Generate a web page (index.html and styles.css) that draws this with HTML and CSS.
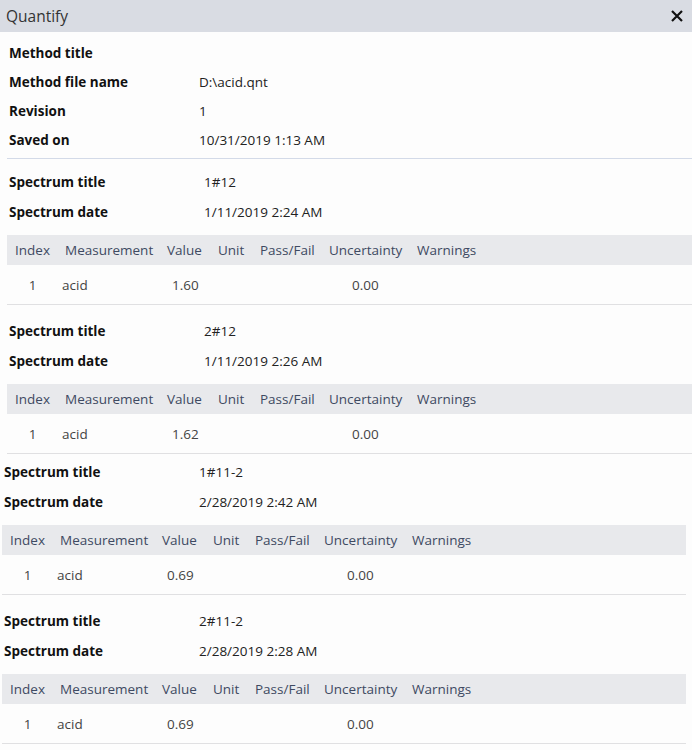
FILE: index.html
```html
<!DOCTYPE html>
<html>
<head>
<meta charset="utf-8">
<link rel="stylesheet" href="styles.css">
</head>
<body>
<div class="titlebar">
  <span class="title">Quantify</span>
  <svg class="close" width="12" height="12" viewBox="0 0 12 12"><path d="M1 1 L11 11 M11 1 L1 11" stroke="#111" stroke-width="2.2" fill="none"/></svg>
</div>
<div class="method">
  <div class="mrow"><span class="label">Method title</span><span class="val"></span></div>
  <div class="mrow"><span class="label">Method file name</span><span class="val">D:\acid.qnt</span></div>
  <div class="mrow"><span class="label">Revision</span><span class="val">1</span></div>
  <div class="mrow"><span class="label">Saved on</span><span class="val">10/31/2019 1:13 AM</span></div>
</div>
<div class="upper">
  <div class="section first">
    <div class="srow"><span class="label">Spectrum title</span><span class="val">1#12</span></div>
    <div class="srow"><span class="label">Spectrum date</span><span class="val">1/11/2019 2:24 AM</span></div>
    <div class="thead"><span>Index</span><span>Measurement</span><span>Value</span><span>Unit</span><span>Pass/Fail</span><span>Uncertainty</span><span>Warnings</span></div>
    <div class="trow"><span class="idx">1</span><span class="m">acid</span><span class="v">1.60</span><span></span><span></span><span class="u">0.00</span><span></span></div>
  </div>
  <div class="section">
    <div class="srow"><span class="label">Spectrum title</span><span class="val">2#12</span></div>
    <div class="srow"><span class="label">Spectrum date</span><span class="val">1/11/2019 2:26 AM</span></div>
    <div class="thead"><span>Index</span><span>Measurement</span><span>Value</span><span>Unit</span><span>Pass/Fail</span><span>Uncertainty</span><span>Warnings</span></div>
    <div class="trow"><span class="idx">1</span><span class="m">acid</span><span class="v">1.62</span><span></span><span></span><span class="u">0.00</span><span></span></div>
  </div>
</div>
<div class="lower">
  <div class="section third">
    <div class="srow"><span class="label">Spectrum title</span><span class="val">1#11-2</span></div>
    <div class="srow"><span class="label">Spectrum date</span><span class="val">2/28/2019 2:42 AM</span></div>
    <div class="thead"><span>Index</span><span>Measurement</span><span>Value</span><span>Unit</span><span>Pass/Fail</span><span>Uncertainty</span><span>Warnings</span></div>
    <div class="trow"><span class="idx">1</span><span class="m">acid</span><span class="v">0.69</span><span></span><span></span><span class="u">0.00</span><span></span></div>
  </div>
  <div class="section">
    <div class="srow"><span class="label">Spectrum title</span><span class="val">2#11-2</span></div>
    <div class="srow"><span class="label">Spectrum date</span><span class="val">2/28/2019 2:28 AM</span></div>
    <div class="thead"><span>Index</span><span>Measurement</span><span>Value</span><span>Unit</span><span>Pass/Fail</span><span>Uncertainty</span><span>Warnings</span></div>
    <div class="trow"><span class="idx">1</span><span class="m">acid</span><span class="v">0.69</span><span></span><span></span><span class="u">0.00</span><span></span></div>
  </div>
</div>
</body>
</html>
```
FILE: styles.css
```css
* { box-sizing: border-box; }
html, body { margin: 0; padding: 0; }
body {
  width: 692px;
  height: 750px;
  overflow: hidden;
  background: #fdfdfd;
  font-family: "Open Sans", "Noto Sans", sans-serif;
  font-size: 13.5px;
  color: #222;
}
.titlebar {
  height: 32px;
  background: #d9dce3;
  display: flex;
  align-items: center;
  justify-content: space-between;
  padding: 0 9px 0 6px;
}
.title { font-size: 15.5px; color: #333; }
.close { display: block; }
.method {
  padding: 6px 0 4px 9px;
}
.mrow, .srow {
  display: flex;
  align-items: center;
}
.mrow { height: 29px; }
.mrow .label { width: 190px; }
.srow { height: 30px; }
.srow .label { width: 195px; }
.label { font-weight: 700; color: #111; font-size: 13.5px; }
.val { color: #222; }
.upper { padding-left: 7px; }
.upper .srow { padding-left: 2px; }
.upper .section:last-child { border-bottom: 1px solid #e0e0e2; }
.lower { padding-left: 2px; padding-right: 6px; }
.lower .srow { padding-left: 2px; }
.lower .section:last-child { border-bottom: 1px solid #e0e0e2; }
.section {
  border-top: 1px solid #e0e0e2;
  padding-top: 11px;
}
.upper .section.first { border-top-color: #d3dae8; padding-top: 8px; }
.lower .section.third { padding-top: 3px; border-top: none; }
.thead, .trow {
  display: grid;
  grid-template-columns: 50px 102px 51px 42px 69px 88px 1fr;
  padding-left: 8px;
  align-items: center;
}
.thead {
  margin-top: 8px;
  height: 30px;
  background: #e8e9ec;
  color: #3e4a62;
}
.trow {
  height: 39px;
  color: #444;
}
.trow .idx { text-align: center; width: 35px; }
.trow .m { margin-left: -3px; }
.trow .v { padding-left: 5px; }
.trow .u { padding-left: 23px; }
```
